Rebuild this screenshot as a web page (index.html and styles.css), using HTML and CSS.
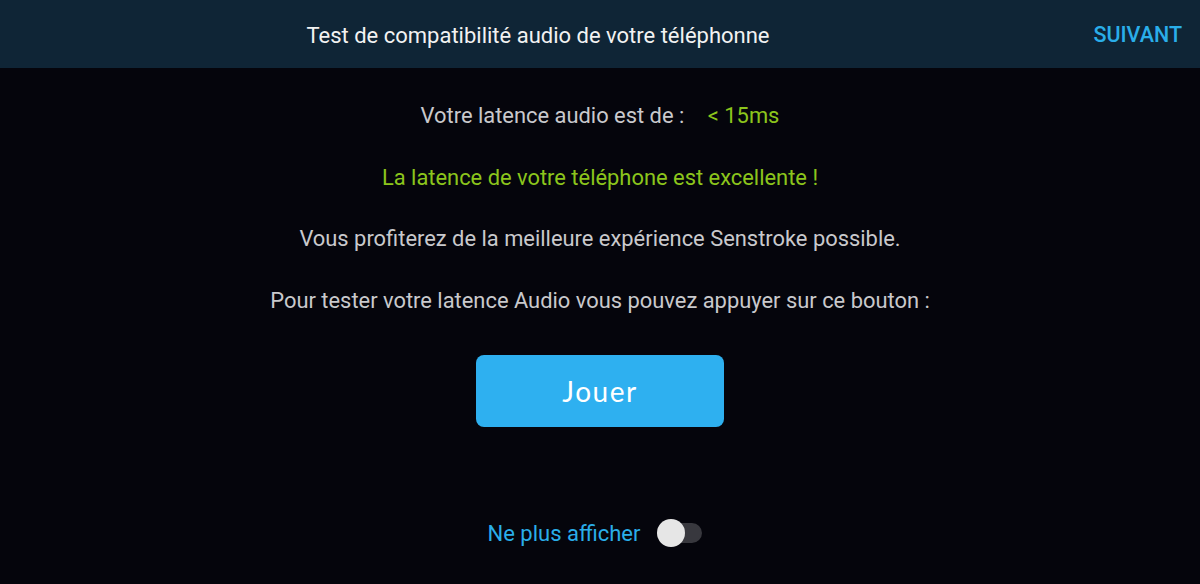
FILE: index.html
```html
<!DOCTYPE html>
<html>
<head>
  <meta charset="utf-8">
  <link rel="stylesheet" href="styles.css">
</head>
<body>

<header class="topbar">
  <h1 class="title">Test de compatibilité audio de votre téléphonne</h1>
  <a class="next" href="#">SUIVANT</a>
</header>

<main class="content">
  <p class="line">Votre latence audio est de : <span class="value">&lt; 15ms</span></p>
  <p class="line good">La latence de votre téléphone est excellente !</p>
  <p class="line">Vous profiterez de la meilleure expérience Senstroke possible.</p>
  <p class="line">Pour tester votre latence Audio vous pouvez appuyer sur ce bouton :</p>

  <button class="play">Jouer</button>

  <label class="hide-row">
    <span class="hide-label">Ne plus afficher</span>
    <span class="switch"><span class="thumb"></span></span>
  </label>
</main>

</body>
</html>
```

FILE: styles.css
```css
* {
  box-sizing: border-box;
}

body {
  margin: 0;
  padding: 0;
  background: #05050c;
  font-family: 'Roboto', sans-serif;
  height: 584px;
  overflow: hidden;
}

.topbar {
  height: 68px;
  background: #0f2536;
  display: flex;
  align-items: center;
  justify-content: center;
  position: relative;
}

.title {
  margin: 2px 0 0 -124px;
  font-family: 'Liberation Sans Narrow', 'Roboto', sans-serif;
  font-weight: 400;
  font-size: 22px;
  color: #f2f2f2;
}

.next {
  position: absolute;
  right: 18px;
  top: 22px;
  color: #2aaee9;
  font-weight: 500;
  font-size: 21.5px;
  text-decoration: none;
}

.content {
  display: flex;
  flex-direction: column;
  align-items: center;
  padding-top: 17px;
}

.line {
  margin: 0;
  height: 61.5px;
  line-height: 61.5px;
  font-size: 21.9px;
  color: #c9c9cc;
}

.value {
  color: #8cc51c;
  margin-left: 18px;
}

.good {
  color: #8cc51c;
}

.play {
  margin-top: 24px;
  width: 248px;
  height: 72px;
  border: none;
  border-radius: 8px;
  background: #2eb0f0;
  color: #fff;
  font-family: 'Lato', sans-serif;
  font-weight: 400;
  font-size: 28px;
  letter-spacing: 1.5px;
  cursor: pointer;
}

.hide-row {
  margin-top: 86px;
  margin-left: -10px;
  display: flex;
  align-items: center;
  gap: 19px;
  height: 40px;
}

.hide-label {
  color: #2aaee9;
  font-size: 22px;
}

.switch {
  position: relative;
  width: 43px;
  height: 20px;
  border-radius: 10px;
  background: #38383e;
}

.thumb {
  position: absolute;
  left: -2px;
  top: -4px;
  width: 28px;
  height: 28px;
  border-radius: 50%;
  background: #e6e6e6;
}
```
